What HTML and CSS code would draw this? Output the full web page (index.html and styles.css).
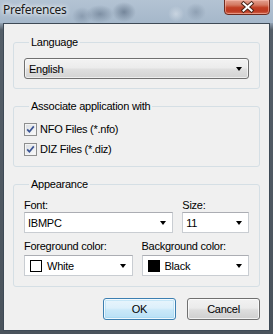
FILE: index.html
```html
<!DOCTYPE html>
<html lang="en">
  <head>
    <meta charset="UTF-8" />
    <title>Preferences</title>
    <link rel="stylesheet" href="styles.css">
  </head>
  <body>
    <div class="window">
      <div class="titlebar">
        <span class="title">Preferences</span>
        <button class="close" aria-label="Close">
          <svg width="44" height="14" viewBox="0 0 44 14">
            <path d="M18.5 3.5 L26.5 10.5 M26.5 3.5 L18.5 10.5" stroke="#4a2418" stroke-width="4" stroke-linecap="square" fill="none" />
            <path d="M18.5 3.5 L26.5 10.5 M26.5 3.5 L18.5 10.5" stroke="#fff" stroke-width="2" stroke-linecap="square" fill="none" />
          </svg>
        </button>
      </div>
      <div class="client">
        <fieldset class="group">
          <legend>Language</legend>
          <div class="combo combo-list">English<span class="arrow"></span></div>
        </fieldset>

        <fieldset class="group group-assoc">
          <legend>Associate application with</legend>
          <label class="check">
            <span class="box">
              <svg width="13" height="13" viewBox="0 0 13 13">
                <path d="M3.2 6.4 L5.4 8.8 L9.8 3.4" stroke="#3b5493" stroke-width="1.7" fill="none" />
              </svg>
            </span>
            NFO Files (*.nfo)
          </label>
          <label class="check">
            <span class="box">
              <svg width="13" height="13" viewBox="0 0 13 13">
                <path d="M3.2 6.4 L5.4 8.8 L9.8 3.4" stroke="#3b5493" stroke-width="1.7" fill="none" />
              </svg>
            </span>
            DIZ Files (*.diz)
          </label>
        </fieldset>

        <fieldset class="group group-look">
          <legend>Appearance</legend>
          <div class="row row-font">
            <div class="field field-font">
              <div class="lbl">Font:</div>
              <div class="combo">IBMPC<span class="arrow"></span></div>
            </div>
            <div class="field field-size">
              <div class="lbl">Size:</div>
              <div class="combo">11<span class="arrow"></span></div>
            </div>
          </div>
          <div class="row row-color">
            <div class="field field-fg">
              <div class="lbl">Foreground color:</div>
              <div class="combo combo-color"><span class="swatch"></span>White<span class="arrow"></span></div>
            </div>
            <div class="field field-bg">
              <div class="lbl">Background color:</div>
              <div class="combo combo-color"><span class="swatch swatch-black"></span>Black<span class="arrow"></span></div>
            </div>
          </div>
        </fieldset>

        <div class="buttons">
          <button class="btn btn-default">OK</button>
          <button class="btn">Cancel</button>
        </div>
      </div>
    </div>
  </body>
</html>
```

FILE: styles.css
```css
body {
  margin: 0;
  background: #fff;
  font-family: "Liberation Sans", Arial, sans-serif;
  font-size: 11px;
  letter-spacing: -0.25px;
  color: #000;
}
.window {
  width: 273px;
  height: 334px;
  background: linear-gradient(to bottom, #aabbcd 0, #9aabbd 22px, #545e68 30px, #4a535c 100%);
  overflow: hidden;
}
.titlebar {
  height: 23px;
  display: flex;
  justify-content: space-between;
  align-items: flex-start;
  background:
    radial-gradient(ellipse 14px 9px at 100px 14px, rgba(90, 108, 130, 0.55), transparent),
    radial-gradient(ellipse 12px 10px at 124px 12px, rgba(80, 98, 120, 0.6), transparent),
    radial-gradient(ellipse 10px 9px at 82px 16px, rgba(100, 118, 140, 0.45), transparent),
    radial-gradient(ellipse 10px 9px at 196px 12px, rgba(100, 118, 140, 0.4), transparent),
    radial-gradient(ellipse 8px 8px at 176px 14px, rgba(230, 236, 242, 0.5), transparent),
    linear-gradient(to bottom, #b3c3d3, #a5b7ca);
}
.title {
  font-family: "Noto Sans", "Liberation Sans", sans-serif;
  font-size: 12px;
  letter-spacing: -0.3px;
  line-height: 16px;
  margin: 2px 0 0 3px;
  color: #1a1a1a;
  text-shadow: 0 0 4px #fff, 0 0 6px rgba(255, 255, 255, 0.8);
}
.close {
  width: 46px;
  height: 16px;
  margin: -1px 3px 0 0;
  padding: 0;
  border: 1px solid #6e2b1f;
  border-radius: 0 0 4px 4px;
  background: linear-gradient(to bottom, #e3a191 0, #d47a63 35%, #c13f24 55%, #bd3a22 80%, #d46a50 100%);
  box-shadow: inset 0 0 0 1px rgba(255, 200, 185, 0.5);
  display: flex;
  align-items: center;
  justify-content: center;
}
.close svg {
  display: block;
}
.client {
  box-sizing: border-box;
  height: 308px;
  margin: 0 3px;
  padding: 12px 9px 0;
  border: 1px solid #3e4a56;
  background: #f0f0f0;
}
.group {
  margin: 0;
  padding: 9px 10px 9px;
  border: 1px solid #d5dfe5;
  border-radius: 3px;
  min-width: 0;
}
.group + .group {
  margin-top: 11px;
}
.group legend {
  padding: 0 2px;
  margin-left: 5px;
  line-height: 13px;
}
.combo {
  box-sizing: border-box;
  height: 21px;
  display: flex;
  align-items: center;
  padding: 0 6px 0 3px;
  border: 1px solid #c9cdd2;
  border-top-color: #abadb3;
  background: #fff;
}
.combo-list {
  padding-left: 4px;
  border: 1px solid #707070;
  border-radius: 3px;
  background: linear-gradient(to bottom, #f3f3f3 0, #ececec 45%, #dfdfdf 55%, #d3d3d3 100%);
  box-shadow: inset 0 0 0 1px rgba(255, 255, 255, 0.6);
}
.arrow {
  margin-left: auto;
  width: 0;
  height: 0;
  border-left: 3.5px solid transparent;
  border-right: 3.5px solid transparent;
  border-top: 4px solid #000;
}
.group-assoc {
  padding-top: 6px;
  padding-bottom: 7px;
}
.check {
  height: 20px;
  display: flex;
  align-items: center;
  gap: 3px;
}
.box {
  box-sizing: border-box;
  width: 13px;
  height: 13px;
  border: 1px solid #8e8f8f;
  background: linear-gradient(135deg, #d9dde2, #fbfbfb);
  box-shadow: inset 0 0 0 1px #f4f4f4;
  display: flex;
  align-items: center;
  justify-content: center;
}
.box svg {
  display: block;
  margin: -1px;
}
.group-look {
  padding-top: 8px;
  padding-bottom: 10px;
}
.row {
  display: flex;
  gap: 9px;
}
.row-color {
  margin-top: 7px;
}
.lbl {
  line-height: 13px;
}
.row-color .lbl {
  margin-bottom: 2px;
}
.field-font { width: 150px; }
.field-size { width: 67px; }
.field-fg { width: 109px; }
.field-bg { width: 108px; }
.combo-color {
  padding-left: 5px;
}
.swatch {
  box-sizing: border-box;
  width: 12px;
  height: 12px;
  margin-right: 5px;
  border: 1px solid #000;
  background: #fff;
}
.swatch-black {
  background: #000;
}
.buttons {
  display: flex;
  justify-content: flex-end;
  gap: 11px;
  margin-top: 11px;
}
.btn {
  width: 73px;
  height: 22px;
  padding: 0;
  font-family: "Liberation Sans", Arial, sans-serif;
  font-size: 11px;
  letter-spacing: -0.25px;
  color: #000;
  border: 1px solid #707070;
  border-radius: 3px;
  background: linear-gradient(to bottom, #f2f2f2 0, #ebebeb 45%, #dddddd 55%, #cfcfcf 100%);
  box-shadow: inset 0 0 0 1px rgba(255, 255, 255, 0.7);
}
.btn-default {
  border-color: #3c7fb1;
  background: linear-gradient(to bottom, #e9f5fc 0, #dcf0fb 45%, #c9e8f9 55%, #b7dff5 100%);
  box-shadow: inset 0 0 0 1px rgba(255, 255, 255, 0.8), inset 0 0 0 2px rgba(150, 210, 240, 0.4);
}
```
